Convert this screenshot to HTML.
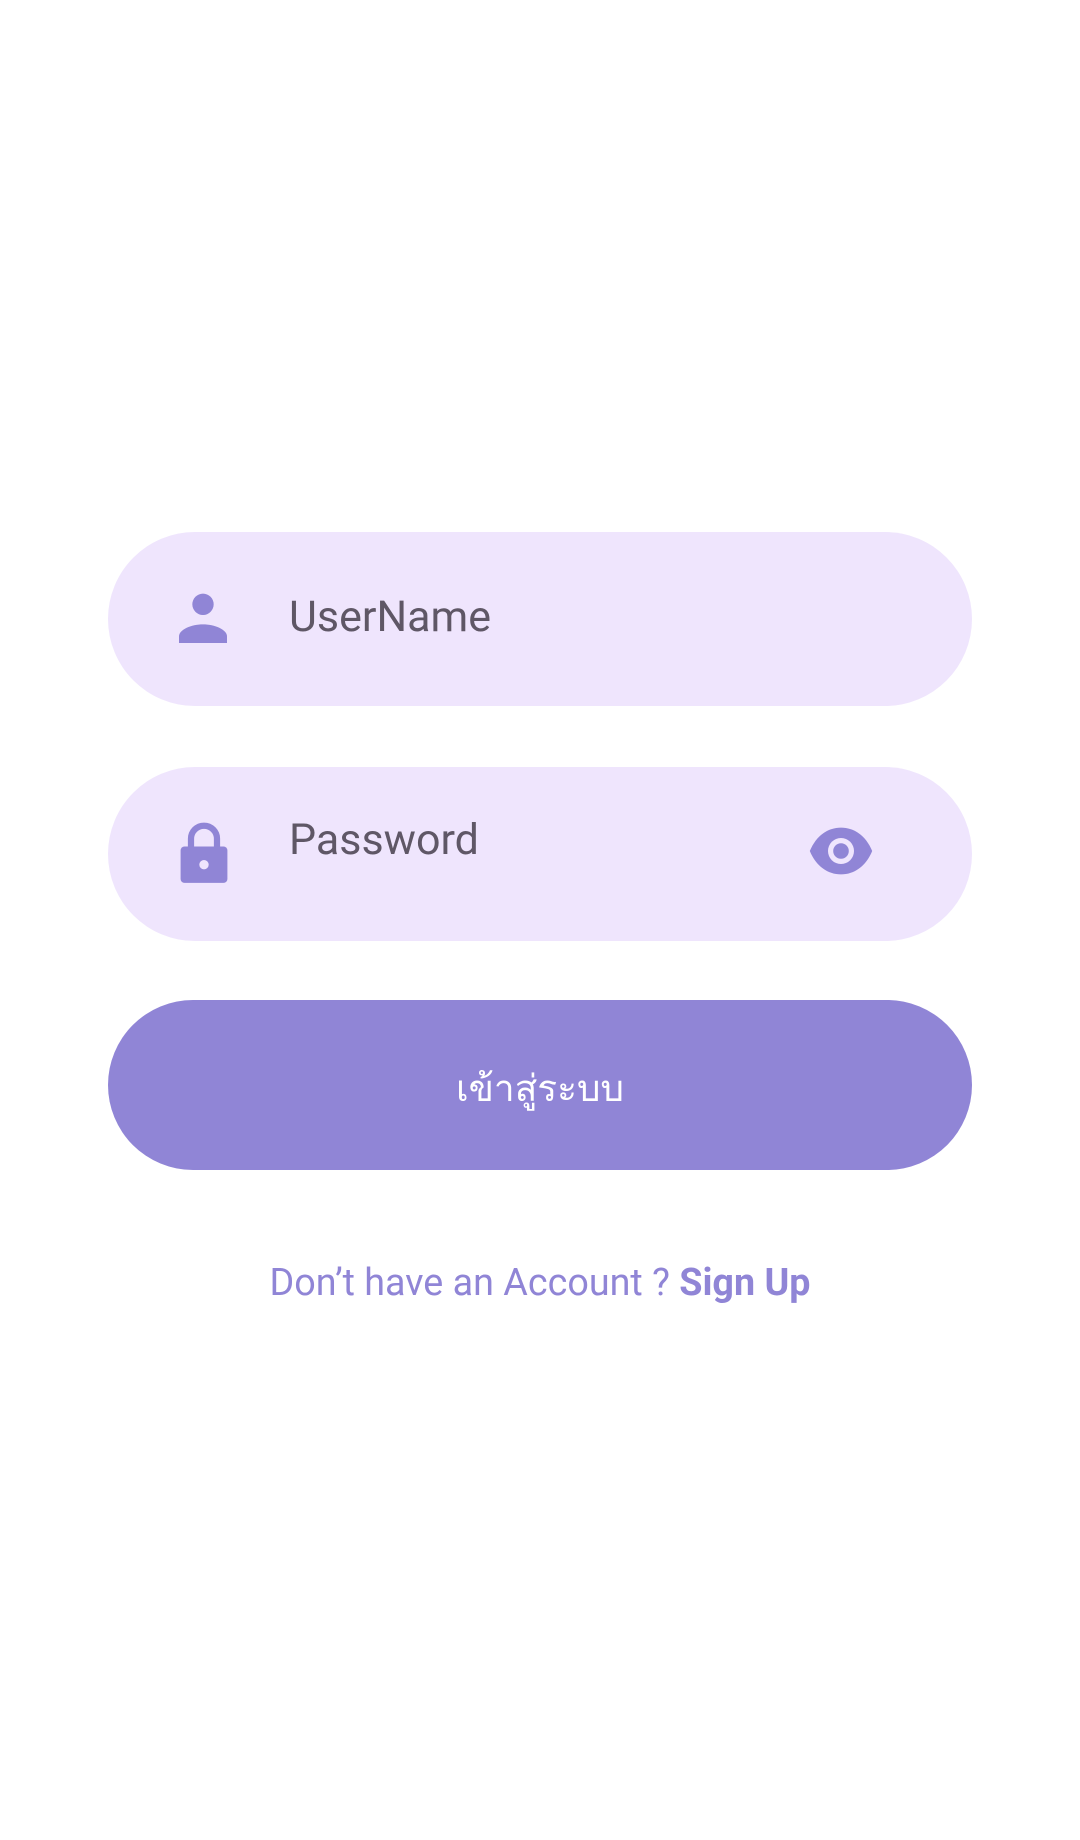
<!DOCTYPE html>
<html><head><meta charset="utf-8"><style>
body{margin:0;width:1080px;height:1840px;background:#fff;position:relative;font-family:"Roboto","Liberation Sans","Noto Sans CJK SC",sans-serif;overflow:hidden}
.f{position:absolute;left:108px;width:864px;height:174px;border-radius:87px;background:#EFE5FD}
.t{position:absolute;left:181px;font-size:43px;color:#5F5766}
.btn{position:absolute;left:108px;top:1000px;width:864px;height:170px;border-radius:85px;background:#9085D6;color:#fff;font-size:37px;text-align:center;line-height:180px}
.s{position:absolute;top:1261px;width:1080px;text-align:center;font-size:37.7px;color:#9085D6}
svg{position:absolute}
</style></head><body>
<div class="f" style="top:532px">
<svg style="left:63px;top:55px" width="64" height="64" viewBox="0 0 24 24"><circle cx="12" cy="6.5" r="4" fill="#9085D6"/><path d="M3 21v-2.5c0-2.5 4.5-4.5 9-4.5s9 2 9 4.5V21z" fill="#9085D6"/></svg>
<div class="t" style="top:60px">UserName</div>
</div>
<div class="f" style="top:767px">
<svg style="left:70px;top:53px" width="52" height="66" viewBox="0 0 20 24"><path d="M5 10V6.5a5 5 0 0 1 10 0V10" fill="none" stroke="#9085D6" stroke-width="2.4"/><rect x="1" y="9.5" width="18" height="14" rx="1.5" fill="#9085D6"/><circle cx="10" cy="16.5" r="1.8" fill="#EFE5FD"/></svg>
<div class="t" style="top:48px">Password</div>
<svg style="left:698px;top:58px" width="70" height="52" viewBox="0 0 26 20"><path d="M1 10C3.5 4 8 1 13 1s9.5 3 12 9c-2.5 6-7 9-12 9S3.5 16 1 10z" fill="#9085D6"/><circle cx="13" cy="10" r="5" fill="#EFE5FD"/><circle cx="13" cy="10" r="3" fill="#9085D6"/></svg>
</div>
<div class="btn">เข้าสู่ระบบ</div>
<div class="s">Don’t have an Account ? <b>Sign Up</b></div>
</body></html>
